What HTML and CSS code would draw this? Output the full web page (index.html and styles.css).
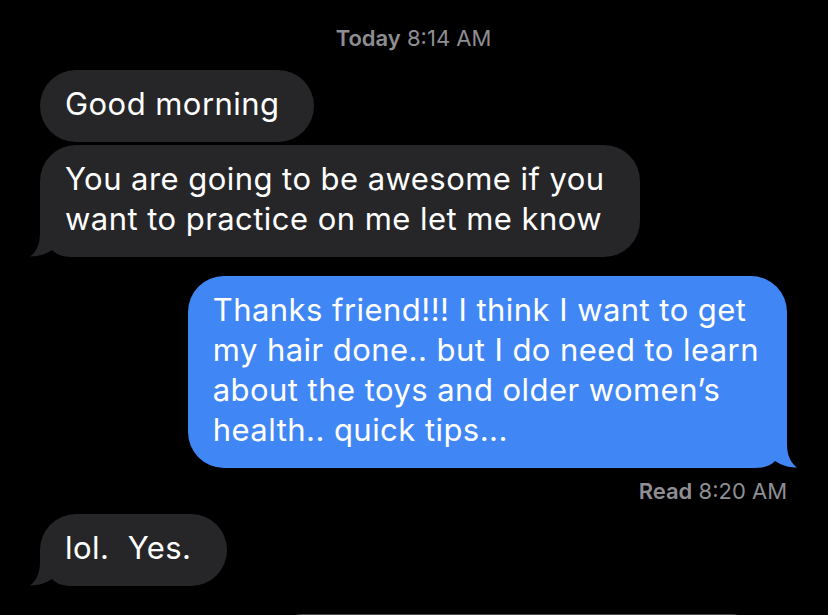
FILE: index.html
```html
<!DOCTYPE html>
<html lang="en">
<head>
<meta charset="utf-8">
<title>Messages</title>
<link rel="stylesheet" href="styles.css">
</head>
<body>
<main class="thread">
  <div class="stamp"><b>Today</b> 8:14 AM</div>

  <div class="msg in first">Good morning</div>

  <div class="msg in">You are going to be awesome if you<br>want to practice on me let me know<svg class="tail" viewBox="0 0 50 36" aria-hidden="true"><path d="M10,0 L50,0 L50,36 L42,36 C33,36 27,34 22,29 C15,33.5 8,35.5 0,35.5 C6,31 10,24 10,12 Z"/></svg></div>

  <div class="msg out">Thanks friend!!! I think I want to get<br>my hair done.. but I do need to learn<br>about the toys and older women’s<br>health.. quick tips...<svg class="tail" viewBox="0 0 50 36" aria-hidden="true"><path d="M10,0 L50,0 L50,36 L42,36 C33,36 27,34 22,29 C15,33.5 8,35.5 0,35.5 C6,31 10,24 10,12 Z"/></svg></div>

  <div class="read"><b>Read</b> 8:20 AM</div>

  <div class="msg in">lol.&nbsp; Yes.<svg class="tail" viewBox="0 0 50 36" aria-hidden="true"><path d="M10,0 L50,0 L50,36 L42,36 C33,36 27,34 22,29 C15,33.5 8,35.5 0,35.5 C6,31 10,24 10,12 Z"/></svg></div>

  <div class="preview"></div>
</main>
</body>
</html>
```

FILE: styles.css
```css
* { box-sizing: border-box; }

html, body {
  margin: 0;
  height: 100%;
  background: #000;
  overflow: hidden;
}

body {
  font-family: Inter, "Noto Sans", "Liberation Sans", sans-serif;
  color: #fff;
}

.thread {
  display: flex;
  flex-direction: column;
  padding: 25px 41px 0 40px;
}

.stamp {
  align-self: center;
  font-size: 22px;
  line-height: 26px;
  color: #8e8e93;
  margin-bottom: 19px;
}

.stamp b, .read b { font-weight: 600; }

.msg {
  position: relative;
  isolation: isolate;
  width: fit-content;
  font-size: 31px;
  line-height: 40px;
  letter-spacing: 0.45px;
  padding: 14px 35px 18px 25px;
  border-radius: 36px;
  white-space: nowrap;
}

.msg.in {
  align-self: flex-start;
  background: #262628;
  fill: #262628;
  margin-top: 3px;
}

.msg.in.first { margin-top: 0; }

.msg.out {
  align-self: flex-end;
  background: #4087f5;
  fill: #4087f5;
  padding-right: 28px;
  margin-top: 19px;
}

.tail {
  position: absolute;
  z-index: -1;
  bottom: 0;
  left: -10px;
  width: 50px;
  height: 36px;
}

.msg.out .tail {
  left: auto;
  right: -10px;
  transform: scaleX(-1);
}

.read {
  align-self: flex-end;
  font-size: 22px;
  line-height: 26px;
  color: #8e8e93;
  margin-top: 10px;
  margin-bottom: 7px;
}

.preview {
  align-self: flex-end;
  width: 488px;
  height: 80px;
  margin-top: 28px;
  margin-right: 26px;
  border-radius: 30px;
  background: #48484a;
}
```
